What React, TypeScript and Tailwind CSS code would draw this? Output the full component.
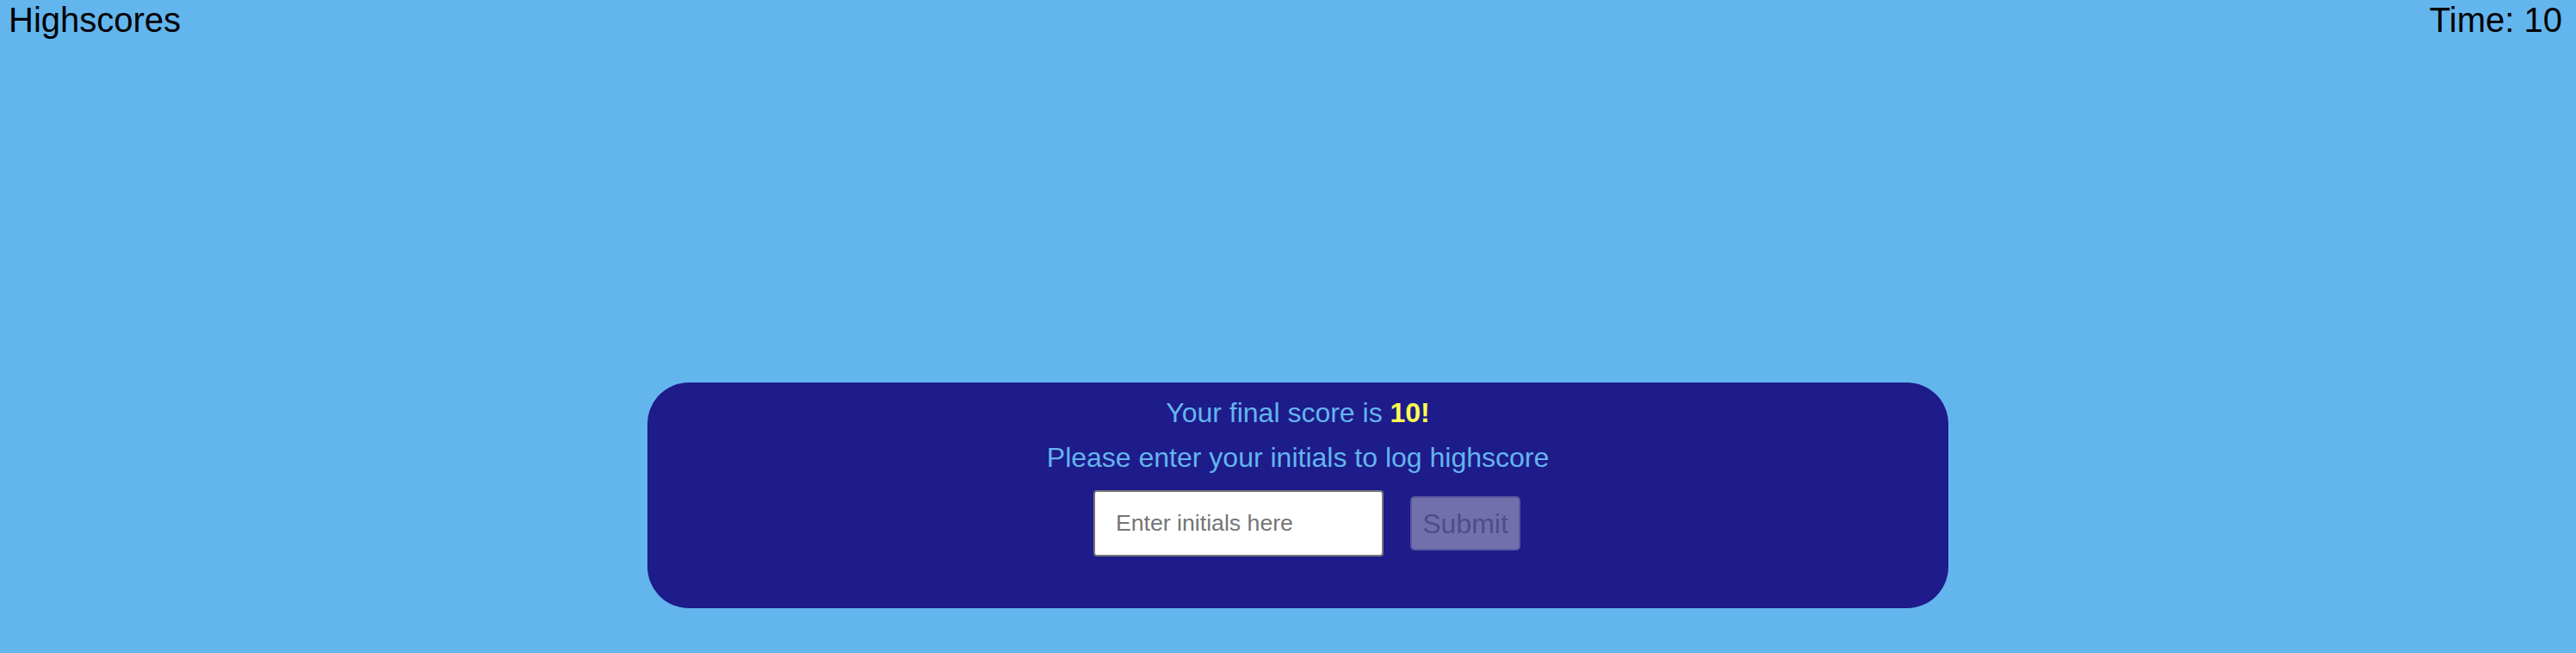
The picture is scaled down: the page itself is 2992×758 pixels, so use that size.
import { useState } from 'react';

export default function App() {
  const [initials, setInitials] = useState('');
  const score = 10;
  const time = 10;

  return (
    <div className="min-h-[758px] w-full bg-[#63b5ee] font-['Liberation_Sans',Arial,sans-serif]">
      <header className="flex items-start justify-between pl-[10px] pr-[16px] text-[40px] leading-[46px] text-black">
        <a href="#highscores">Highscores</a>
        <span>Time: {time}</span>
      </header>

      <section className="ml-[752px] mt-[398px] flex w-[1511px] flex-col items-center rounded-[48px] bg-[#1e1b8a] pt-[17px] pb-[60px] text-[#63b5ee]">
        <p className="text-[32px] leading-[37px]">
          Your final score is{' '}
          <span className="font-bold text-[#ffff4f]">{score}!</span>
        </p>
        <p className="mt-[15px] text-[32px] leading-[37px]">
          Please enter your initials to log highscore
        </p>
        <form
          className="ml-[21px] mt-[19px] flex items-center gap-[31px]"
          onSubmit={(e) => e.preventDefault()}
        >
          <input
            type="text"
            value={initials}
            onChange={(e) => setInitials(e.target.value)}
            placeholder="Enter initials here"
            className="h-[77px] w-[337px] rounded-[4px] border-2 border-[#767676] bg-white px-[24px] text-[26.67px] text-black placeholder:text-[#757575]"
          />
          <button
            type="submit"
            disabled={!initials}
            className="h-[63px] w-[128px] rounded-[5px] border-2 border-[#5a59a0] bg-[#7170ad] text-[32px] text-[#4e4c8c]"
          >
            Submit
          </button>
        </form>
      </section>
    </div>
  );
}
